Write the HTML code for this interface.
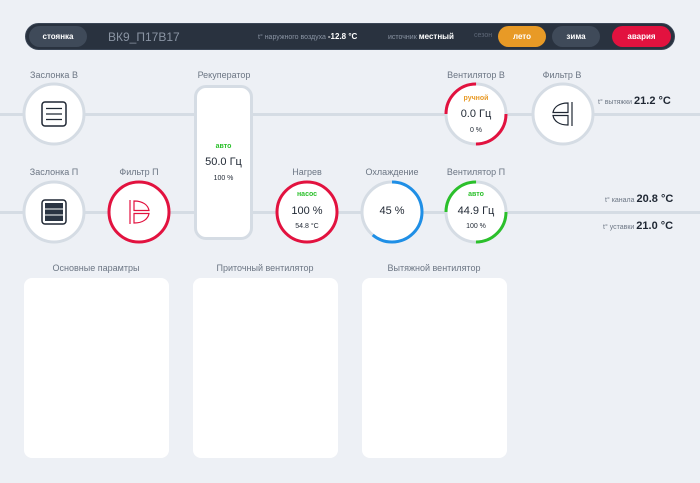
<!DOCTYPE html>
<html><head><meta charset="utf-8"><style>
*{margin:0;padding:0;box-sizing:border-box}
body{width:700px;height:483px;background:#edf0f5;font-family:"Liberation Sans",sans-serif;position:relative;overflow:hidden;color:#1f2733}
.a{position:absolute}
.hdr{left:25px;top:23px;width:650px;height:27px;background:#29323f;border-radius:14px;border:1px solid #3b4656}
.btn{position:absolute;top:26px;height:21px;border-radius:11px;font-size:8px;font-weight:bold;color:#fff;text-align:center;line-height:21px}
.lbl{position:absolute;font-size:9px;color:#6c7684;text-align:center;width:120px}
.line{position:absolute;height:3px;background:#d5dce4}
svg.c{position:absolute;width:66px;height:66px}
.tx{position:absolute;text-align:center;width:66px}
.panel{position:absolute;top:278px;width:145px;height:180px;background:#fff;border-radius:8px}
</style></head><body>
<div class="a hdr"></div>
<div class="btn" style="left:29px;width:58px;background:#3f4a59">стоянка</div>
<div class="a" style="left:108px;top:30px;font-size:12px;color:#8a94a3">ВК9_П17В17</div>
<div class="a" style="left:258px;top:32px;font-size:7px;color:#8a94a3">t° наружного воздуха <b style="color:#fff;font-size:8px">-12.8 °C</b></div>
<div class="a" style="left:388px;top:32px;font-size:7px;color:#8a94a3">источник <b style="color:#fff;font-size:8px">местный</b></div>
<div class="a" style="left:474px;top:32px;font-size:7px;color:#5e6878">сезон</div>
<div class="btn" style="left:498px;width:48px;background:#e89a26">лето</div>
<div class="btn" style="left:552px;width:48px;background:#3f4a59">зима</div>
<div class="btn" style="left:612px;width:59px;background:#e2123f">авария</div>

<div class="line" style="left:0;top:113px;width:700px"></div>
<div class="line" style="left:0;top:211px;width:700px"></div>

<div class="lbl" style="left:-6px;top:70px">Заслонка В</div>
<div class="lbl" style="left:164px;top:70px">Рекуператор</div>
<div class="lbl" style="left:416px;top:70px">Вентилятор В</div>
<div class="lbl" style="left:502px;top:70px">Фильтр В</div>
<div class="lbl" style="left:-6px;top:167px">Заслонка П</div>
<div class="lbl" style="left:79px;top:167px">Фильтр П</div>
<div class="lbl" style="left:247px;top:167px">Нагрев</div>
<div class="lbl" style="left:332px;top:167px">Охлаждение</div>
<div class="lbl" style="left:416px;top:167px">Вентилятор П</div>

<div class="a" style="left:194px;top:85px;width:59px;height:155px;background:#fff;border:3px solid #d5dce4;border-radius:12px"></div>
<div class="a" style="left:194px;top:143px;width:59px;text-align:center;font-size:7px;font-weight:bold;color:#2bc02b">авто</div>
<div class="a" style="left:194px;top:156px;width:59px;text-align:center;font-size:11px">50.0 Гц</div>
<div class="a" style="left:194px;top:175px;width:59px;text-align:center;font-size:7px">100 %</div>

<svg class="c" style="left:21px;top:81px" viewBox="0 0 66 66"><circle cx="33" cy="33" r="30" fill="#fff" stroke="#d5dce4" stroke-width="3"/><rect x="21" y="21" width="24" height="24" rx="3" fill="none" stroke="#1f2733" stroke-width="1.5"/><path d="M25 27.5H41M25 33H41M25 38.5H41" stroke="#1f2733" stroke-width="1.3"/></svg>
<svg class="c" style="left:21px;top:179px" viewBox="0 0 66 66"><circle cx="33" cy="33" r="30" fill="#fff" stroke="#d5dce4" stroke-width="3"/><rect x="21" y="21" width="24" height="24" rx="3" fill="none" stroke="#1f2733" stroke-width="1.5"/><rect x="24" y="24" width="18" height="18" fill="#2a3442"/><path d="M24 30H42M24 36H42" stroke="#fff" stroke-width="1"/></svg>
<svg class="c" style="left:106px;top:179px" viewBox="0 0 66 66"><circle cx="33" cy="33" r="30" fill="#fff" stroke="#e2123f" stroke-width="3"/><path d="M24 21V45M28 22C37 22 42 26 43 31.5L28 31.5ZM28 34.5L43 34.5C42 40 37 44 28 44Z" fill="none" stroke="#e2123f" stroke-width="1.2"/></svg>
<svg class="c" style="left:530px;top:81px" viewBox="0 0 66 66"><circle cx="33" cy="33" r="30" fill="#fff" stroke="#d5dce4" stroke-width="3"/><path d="M42 21V45M38 22C29 22 24 26 23 31.5L38 31.5ZM38 34.5L23 34.5C24 40 29 44 38 44Z" fill="none" stroke="#1f2733" stroke-width="1.2"/></svg>

<svg class="c" style="left:443px;top:81px" viewBox="0 0 66 66"><circle cx="33" cy="33" r="30" fill="#fff" stroke="#d5dce4" stroke-width="3"/><circle cx="33" cy="33" r="30" fill="none" stroke="#e2123f" stroke-width="3" stroke-dasharray="47.1 141.4" transform="rotate(180 33 33)"/><circle cx="33" cy="33" r="30" fill="none" stroke="#e2123f" stroke-width="3" stroke-dasharray="47.1 141.4"/></svg>
<div class="tx" style="left:443px;top:95px;font-size:7px;font-weight:bold;color:#e89a26">ручной</div>
<div class="tx" style="left:443px;top:108px;font-size:11px">0.0 Гц</div>
<div class="tx" style="left:443px;top:127px;font-size:7px">0 %</div>

<svg class="c" style="left:274px;top:179px" viewBox="0 0 66 66"><circle cx="33" cy="33" r="30" fill="#fff" stroke="#e2123f" stroke-width="3"/></svg>
<div class="tx" style="left:274px;top:191px;font-size:7px;font-weight:bold;color:#2bc02b">насос</div>
<div class="tx" style="left:274px;top:205px;font-size:11px">100 %</div>
<div class="tx" style="left:274px;top:223px;font-size:7px">54.8 °C</div>

<svg class="c" style="left:359px;top:179px" viewBox="0 0 66 66"><circle cx="33" cy="33" r="30" fill="#fff" stroke="#d5dce4" stroke-width="3"/><circle cx="33" cy="33" r="30" fill="none" stroke="#1f8fe6" stroke-width="3" stroke-dasharray="115 200" transform="rotate(-90 33 33)"/></svg>
<div class="tx" style="left:359px;top:205px;font-size:11px">45 %</div>

<svg class="c" style="left:443px;top:179px" viewBox="0 0 66 66"><circle cx="33" cy="33" r="30" fill="#fff" stroke="#d5dce4" stroke-width="3"/><circle cx="33" cy="33" r="30" fill="none" stroke="#2bc02b" stroke-width="3" stroke-dasharray="47.1 141.4" transform="rotate(180 33 33)"/><circle cx="33" cy="33" r="30" fill="none" stroke="#2bc02b" stroke-width="3" stroke-dasharray="47.1 141.4"/></svg>
<div class="tx" style="left:443px;top:191px;font-size:7px;font-weight:bold;color:#2bc02b">авто</div>
<div class="tx" style="left:443px;top:205px;font-size:11px">44.9 Гц</div>
<div class="tx" style="left:443px;top:223px;font-size:7px">100 %</div>

<div class="a" style="left:598px;top:95px;font-size:7px;color:#6c7684">t° вытяжки <span style="font-size:11px;color:#1f2733;font-weight:bold">21.2 °C</span></div>
<div class="a" style="left:605px;top:193px;font-size:7px;color:#6c7684">t° канала <span style="font-size:11px;color:#1f2733;font-weight:bold">20.8 °C</span></div>
<div class="a" style="left:603px;top:220px;font-size:7px;color:#6c7684">t° уставки <span style="font-size:11px;color:#1f2733;font-weight:bold">21.0 °C</span></div>

<div class="lbl" style="left:36px;top:263px">Основные парамтры</div>
<div class="lbl" style="left:205px;top:263px">Приточный вентилятор</div>
<div class="lbl" style="left:374px;top:263px">Вытяжной вентилятор</div>
<div class="panel" style="left:24px"></div>
<div class="panel" style="left:193px"></div>
<div class="panel" style="left:362px"></div>
</body></html>
